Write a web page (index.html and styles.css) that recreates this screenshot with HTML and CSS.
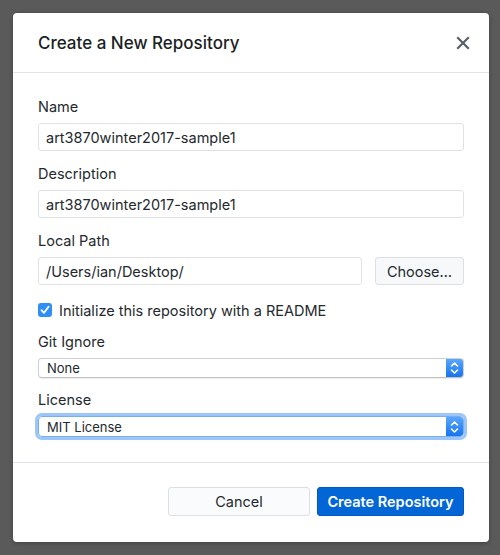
FILE: index.html
```html
<!DOCTYPE html>
<html>
<head>
<meta charset="utf-8">
<link rel="stylesheet" href="styles.css">
</head>
<body>
<div class="dialog">
  <div class="header">
    <div class="title">Create a New Repository</div>
    <svg class="close" width="14" height="14" viewBox="0 0 14 14"><path d="M2 2 L12 12 M12 2 L2 12" stroke="#586069" stroke-width="2.2" stroke-linecap="square"/></svg>
  </div>
  <div class="body">
    <div class="group">
      <div class="label">Name</div>
      <div class="input">art3870winter2017-sample1</div>
    </div>
    <div class="group">
      <div class="label">Description</div>
      <div class="input">art3870winter2017-sample1</div>
    </div>
    <div class="group">
      <div class="label">Local Path</div>
      <div class="path-row">
        <div class="input grow">/Users/ian/Desktop/</div>
        <div class="btn choose">Choose…</div>
      </div>
    </div>
    <div class="check-row">
      <span class="checkbox"><svg width="14" height="14" viewBox="0 0 14 14"><path d="M3.5 7.2 L6 9.8 L10.6 3.8" fill="none" stroke="#fff" stroke-width="1.8" stroke-linecap="round" stroke-linejoin="round"/></svg></span>
      <span>Initialize this repository with a README</span>
    </div>
    <div class="group sel-group">
      <div class="label">Git Ignore</div>
      <div class="select"><span class="sel-text">None</span><span class="arrows"><svg width="17" height="20" viewBox="0 0 17 20"><path d="M5.5 8 L8.5 5 L11.5 8 M5.5 12 L8.5 15 L11.5 12" fill="none" stroke="#fff" stroke-width="1.6" stroke-linecap="round" stroke-linejoin="round"/></svg></span></div>
    </div>
    <div class="group sel-group">
      <div class="label">License</div>
      <div class="select focus"><span class="sel-text">MIT License</span><span class="arrows"><svg width="17" height="20" viewBox="0 0 17 20"><path d="M5.5 8 L8.5 5 L11.5 8 M5.5 12 L8.5 15 L11.5 12" fill="none" stroke="#fff" stroke-width="1.6" stroke-linecap="round" stroke-linejoin="round"/></svg></span></div>
    </div>
  </div>
  <div class="footer">
    <div class="btn cancel">Cancel</div>
    <div class="btn primary">Create Repository</div>
  </div>
</div>
</body>
</html>
```

FILE: styles.css
```css
html, body {
  margin: 0;
  padding: 0;
}
body {
  background: #5a5a5a;
  width: 500px;
  height: 555px;
  overflow: hidden;
  font-family: "Inter", "Liberation Sans", sans-serif;
  font-size: 14.5px;
  color: #24292e;
  padding: 13px 0 0 13px;
  box-sizing: border-box;
}
.dialog {
  width: 476px;
  height: 529px;
  background: #fff;
  border-radius: 4px;
  display: flex;
  flex-direction: column;
  box-shadow: 0 1px 4px rgba(0,0,0,0.3);
}
.header {
  height: 60px;
  box-sizing: border-box;
  border-bottom: 1px solid #e1e4e8;
  display: flex;
  align-items: center;
  justify-content: space-between;
  padding: 0 19px 0 25px;
}
.title {
  font-size: 17px;
  font-weight: 500;
  color: #1b1f23;
}
.close {
  display: block;
}
.body {
  flex: 1;
  padding: 25px 25px 0 25px;
  box-sizing: border-box;
  display: flex;
  flex-direction: column;
}
.group {
  display: flex;
  flex-direction: column;
  margin-bottom: 14px;
}
.label {
  line-height: 18px;
  margin-bottom: 7px;
}
.input {
  height: 28px;
  box-sizing: border-box;
  border: 1px solid #dfe2e5;
  border-radius: 3px;
  padding: 0 7px;
  display: flex;
  align-items: center;
}
.path-row {
  display: flex;
  gap: 13px;
}
.grow {
  flex: 1;
}
.btn {
  height: 29px;
  box-sizing: border-box;
  border: 1px solid #dcdfe3;
  border-radius: 3px;
  background: #f6f8fa;
  display: flex;
  align-items: center;
  justify-content: center;
}
.path-row .btn {
  height: 28px;
}
.choose {
  width: 89px;
}
.check-row {
  display: flex;
  align-items: center;
  height: 20px;
  margin-top: 1px;
  gap: 7px;
}
.checkbox {
  width: 14px;
  height: 14px;
  border-radius: 3px;
  background: #2f8ff7;
  display: flex;
}
.check-row + .sel-group {
  margin-top: 13px;
  margin-bottom: 13px;
}
.select {
  height: 20px;
  box-sizing: border-box;
  border: 1px solid #d1d1d1;
  border-bottom-color: #c2c2c2;
  border-radius: 4px;
  display: flex;
  align-items: center;
  justify-content: space-between;
  padding-left: 8px;
  font-size: 13px;
  overflow: hidden;
  box-shadow: 0 0.5px 1px rgba(0,0,0,0.08);
}
.select.focus {
  height: 21px;
  box-shadow: 0 0 0 3px #9cc6f8;
  border-color: #78aef0;
}
.arrows {
  width: 17px;
  align-self: stretch;
  background: linear-gradient(#5aa7fb, #1774f0);
  display: flex;
  align-items: center;
}
.footer {
  height: 80px;
  box-sizing: border-box;
  border-top: 1px solid #e1e4e8;
  display: flex;
  justify-content: flex-end;
  align-items: flex-start;
  padding: 24px 25px 0 0;
  gap: 7px;
}
.cancel {
  width: 142px;
  background: #fafbfc;
}
.primary {
  width: 147px;
  background: #0366d6;
  border-color: #0359bf;
  color: #fff;
  font-weight: 600;
}
```
